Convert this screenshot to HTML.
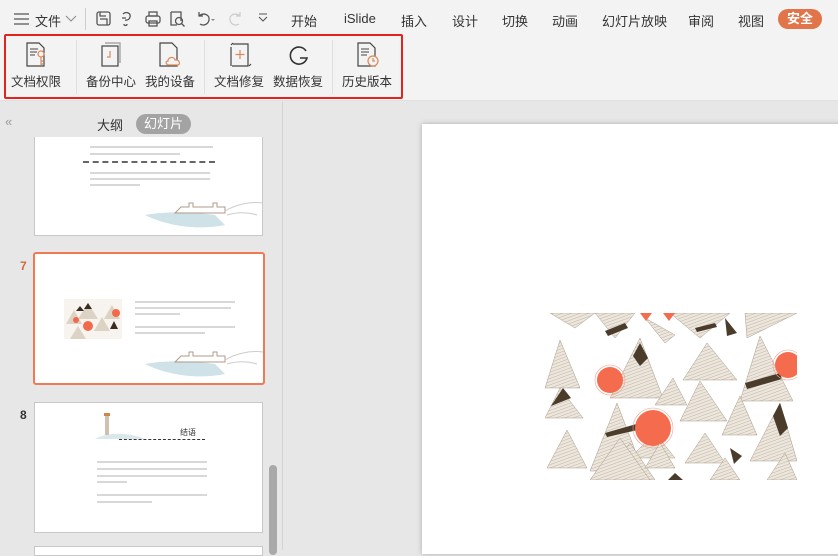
<!DOCTYPE html>
<html><head><meta charset="utf-8">
<style>
*{margin:0;padding:0;box-sizing:border-box}
body{width:838px;height:550px;overflow:hidden;background:#e7e7e7;font-family:"Liberation Sans","Noto Sans CJK SC",sans-serif;position:relative;color:#333}
.a{position:absolute}
.top{left:0;top:0;width:838px;height:101px;background:#f3f3f3;border-bottom:1px solid #e0e0e0}
.m{position:absolute;top:11px;font-size:13px;color:#333;white-space:nowrap}
.lbl{position:absolute;top:71px;font-size:12.5px;color:#333;white-space:nowrap;transform:translateX(-50%)}
.sep{position:absolute;top:40px;width:1px;height:54px;background:#e0e0e0}
.ic{position:absolute;top:42px}
.thumb{position:absolute;background:#fff;border:1px solid #c8c8c8}
.tl{position:absolute;height:1.5px;background:#d8d8d8}
</style></head><body>
<div class="a top"></div>
<svg class="a" style="left:13px;top:12px" width="18" height="14"><path d="M1 2h15M1 7h15M1 12h15" stroke="#555" stroke-width="1.3"/></svg>
<div class="m" style="left:35px">文件</div>
<svg class="a" style="left:65px;top:15px" width="12" height="8"><path d="M1 1l5 5 5-5" stroke="#888" fill="none"/></svg>
<div class="a" style="left:85px;top:8px;width:1px;height:22px;background:#ccc"></div>
<svg class="a" style="left:95px;top:10px" width="180" height="18" fill="none" stroke="#555" stroke-width="1.3">
<rect x="2" y="2" width="13" height="13" rx="2"/><path d="M5 9h7v6M5 2v4h6"/>
<path d="M28 4c3-3 8-1 7 3s-5 3-5 3M27 8h4M29 14c0 2 3 2 3 0"/>
<rect x="51" y="6" width="14" height="7" rx="2"/><rect x="54" y="2" width="8" height="4"/><rect x="54" y="11" width="8" height="5"/>
<path d="M76 2h10v9M76 2v13h6"/><circle cx="84" cy="11" r="3.5"/><path d="M86.5 13.5l3 3"/>
<path d="M104 6c5-4 11-1 10 4s-6 6-9 4M104 2v4h4"/>
<path d="M116 9l2 2 2-2" fill="#888" stroke="none"/>
<path d="M145 6c-5-4-11-1-10 4s6 6 9 4M145 2v4h-4" stroke="#ccc"/>
<path d="M164 7l4 4 4-4M164 4h8" stroke-width="1.1"/>
</svg>
<div class="m" style="left:291px">开始</div>
<div class="m" style="left:344px">iSlide</div>
<div class="m" style="left:401px">插入</div>
<div class="m" style="left:452px">设计</div>
<div class="m" style="left:502px">切换</div>
<div class="m" style="left:552px">动画</div>
<div class="m" style="left:602px">幻灯片放映</div>
<div class="m" style="left:688px">审阅</div>
<div class="m" style="left:738px">视图</div>
<div class="a" style="left:778px;top:9px;width:44px;height:20px;border-radius:10px;background:#e2744a;color:#fff;font-size:13px;text-align:center;line-height:20px;font-weight:bold">安全</div>
<div class="a" style="left:4px;top:34px;width:399px;height:65px;border:2.5px solid #e3241e;border-radius:2px"></div>
<div class="sep" style="left:76px"></div>
<div class="sep" style="left:204px"></div>
<div class="sep" style="left:332px"></div>
<svg class="ic" style="left:24px" width="24" height="26" fill="none" stroke="#444" stroke-width="1.2">
<path d="M3 1h12l5 5v18H3z"/><path d="M6 7h8M6 10h7M6 13h5" stroke-width="1"/><circle cx="17" cy="12" r="3" stroke="#d98a5a"/><path d="M17 15v8M17 19h2M17 22h2" stroke="#d98a5a"/></svg>
<svg class="ic" style="left:100px" width="24" height="26" fill="none" stroke="#444" stroke-width="1.2">
<path d="M5 1h15v20" stroke="#999"/><rect x="2" y="4" width="16" height="20"/><path d="M10 9v6H7" stroke="#d98a5a"/></svg>
<svg class="ic" style="left:158px" width="26" height="26" fill="none" stroke="#444" stroke-width="1.2">
<path d="M2 1h12l5 5v18H2z"/><path d="M11 23c-3 0-4-4-1-4 0-4 6-5 7-1 4-1 6 4 3 5z" fill="#f3f3f3" stroke="#d98a5a"/></svg>
<svg class="ic" style="left:227px" width="26" height="26" fill="none" stroke="#444" stroke-width="1.2">
<path d="M6 2h15v20M21 22v2h-16M4 5v19" /><path d="M4 3l2-2M22 24l2-2"/><path d="M13 8v9M8.5 12.5h9" stroke="#d98a5a"/></svg>
<svg class="ic" style="left:287px;top:44px" width="24" height="24" fill="none" stroke="#333" stroke-width="1.6">
<path d="M19 7A8.5 8.5 0 1 0 20 14H13"/></svg>
<svg class="ic" style="left:355px" width="26" height="26" fill="none" stroke="#444" stroke-width="1.2">
<path d="M3 1h12l5 5v18H3z"/><path d="M6 7h8M6 10h8M6 13h6" stroke-width="1"/><circle cx="18" cy="19" r="5" fill="#f3f3f3" stroke="#d98a5a"/><path d="M18 16v3h2" stroke="#d98a5a"/></svg>
<div class="lbl" style="left:36px">文档权限</div>
<div class="lbl" style="left:111px">备份中心</div>
<div class="lbl" style="left:170px">我的设备</div>
<div class="lbl" style="left:239px">文档修复</div>
<div class="lbl" style="left:298px">数据恢复</div>
<div class="lbl" style="left:367px">历史版本</div>
<div class="a" style="left:282px;top:102px;width:1px;height:448px;background:#d4d4d4"></div>
<div class="a" style="left:5px;top:114px;font-size:13px;color:#999">«</div>
<div class="a" style="left:97px;top:115px;font-size:13px;color:#333">大纲</div>
<div class="a" style="left:136px;top:114px;width:55px;height:20px;border-radius:10px;background:#a3a3a3;color:#fff;font-size:13px;text-align:center;line-height:20px">幻灯片</div>
<div class="thumb" style="left:34px;top:137px;width:229px;height:99px;border-top:none">
<div class="tl" style="left:55px;top:9px;width:123px"></div><div class="tl" style="left:55px;top:16px;width:90px"></div>
<div class="a" style="left:48px;top:24px;width:132px;border-top:2px dashed #666"></div>
<div class="tl" style="left:55px;top:35px;width:120px"></div><div class="tl" style="left:55px;top:41px;width:120px"></div><div class="tl" style="left:55px;top:47px;width:50px"></div>
<svg class="a" style="left:110px;top:64px" width="118" height="34"><path d="M0 14c20-4 50-3 70 0l10 10c-30 6-60 0-80-10z" fill="#cfe2e8"/><path d="M30 12h50v-6h-8v-4h-4v4h-20v-4h-4v4h-8z" fill="none" stroke="#b09a8a" stroke-width="1"/><path d="M80 10c10-6 25-10 38-8M82 14c10-3 20-3 30 0" stroke="#ccc" fill="none"/></svg>
</div>
<div class="a" style="left:20px;top:259px;font-size:12px;font-weight:bold;color:#d06a3c">7</div>
<div class="thumb" style="left:33px;top:252px;width:232px;height:133px;border:2.5px solid #ef7a54;border-radius:3px">
<svg class="a" style="left:29px;top:45px" width="58" height="40">
<rect width="58" height="40" fill="#f7f4ef"/><path d="M2 25l8-14 8 14zM14 20l10-16 10 16zM30 32l8-14 8 14zM40 20l8-14 8 14zM6 40l8-13 8 13z" fill="#ddd3c5"/><path d="M20 10l4-6 4 6zM46 30l4-8 4 8zM12 12l4-5 4 5z" fill="#3a2e22"/><circle cx="24" cy="27" r="5" fill="#f26a4b"/><circle cx="52" cy="14" r="4" fill="#f26a4b"/><circle cx="12" cy="21" r="3" fill="#f26a4b"/></svg>
<div class="tl" style="left:100px;top:47px;width:100px"></div><div class="tl" style="left:100px;top:53px;width:96px"></div><div class="tl" style="left:100px;top:59px;width:45px"></div>
<div class="tl" style="left:100px;top:72px;width:100px"></div><div class="tl" style="left:100px;top:78px;width:70px"></div>
<svg class="a" style="left:110px;top:96px" width="118" height="34"><path d="M0 14c20-4 50-3 70 0l10 10c-30 6-60 0-80-10z" fill="#cfe2e8"/><path d="M30 12h50v-6h-8v-4h-4v4h-20v-4h-4v4h-8z" fill="none" stroke="#b09a8a" stroke-width="1"/><path d="M80 10c10-6 25-10 38-8M82 14c10-3 20-3 30 0" stroke="#ccc" fill="none"/></svg>
</div>
<div class="a" style="left:20px;top:408px;font-size:12px;font-weight:bold;color:#333">8</div>
<div class="thumb" style="left:34px;top:402px;width:229px;height:131px">
<svg class="a" style="left:50px;top:8px" width="80" height="34"><path d="M10 28c10-6 30-8 50 0z" fill="#dbe8eb"/><rect x="20" y="4" width="4" height="20" fill="#d0c0b0"/><rect x="19" y="2" width="6" height="3" fill="#c84"/></svg>
<div class="a" style="left:84px;top:36px;width:86px;border-top:1px dashed #333"></div>
<div class="a" style="left:145px;top:24px;font-size:8px;color:#333">结语</div>
<div class="tl" style="left:62px;top:58px;width:110px"></div><div class="tl" style="left:62px;top:65px;width:110px"></div><div class="tl" style="left:62px;top:72px;width:110px"></div><div class="tl" style="left:62px;top:78px;width:30px"></div>
<div class="tl" style="left:62px;top:91px;width:110px"></div><div class="tl" style="left:62px;top:98px;width:55px"></div>
</div>
<div class="thumb" style="left:34px;top:546px;width:229px;height:10px"></div>
<div class="a" style="left:269px;top:465px;width:8px;height:90px;border-radius:4px;background:#a9a9a9"></div>
<div class="a" style="left:422px;top:124px;width:420px;height:430px;background:#fff;box-shadow:0 0 5px rgba(0,0,0,.25)"></div>
<svg class="a" style="left:545px;top:313px" width="252" height="167" viewBox="0 0 252 167">
<defs><pattern id="h" width="3" height="3" patternUnits="userSpaceOnUse" patternTransform="rotate(70)"><rect width="3" height="3" fill="#ece6dd"/><path d="M0 0v3" stroke="#b5a794" stroke-width=".8"/></pattern></defs>
<rect width="252" height="167" fill="#fff"/>
<g fill="url(#h)" stroke="#a89b8a" stroke-width=".5">
<path d="M5 0h45l-20 15zM50 0h40l-20 25zM125 0h60l-30 25zM200 0h52l-50 25zM100 5l20 25 10-8z"/>
<path d="M15 27l20 48H0z"/><path d="M15 75l23 30H0z"/><path d="M95 25l23 60H65z"/><path d="M128 65l14 27h-32z"/>
<path d="M162 30l30 37h-54z"/><path d="M215 23l33 65h-53z"/><path d="M155 68l27 40h-47z"/><path d="M195 83l17 39h-35z"/>
<path d="M72 90l26 68H45z"/><path d="M235 90l17 58h-47z"/><path d="M22 117l20 38H2z"/><path d="M160 120l20 30h-40z"/>
<path d="M110 120l20 25h-45z"/><path d="M240 140l12 27h-30z"/><path d="M85 130l25 37H60z"/><path d="M180 145l15 22h-30z"/>
</g>
<g fill="#4a3b2b">
<path d="M95 30l8 15-8 8-7-10z"/><path d="M60 18l20-8 3 5-20 8z"/><path d="M18 75l8 10-20 8z"/><path d="M200 70l35-10 2 6-35 10z"/>
<path d="M235 90l8 25-8 8-7-20z"/><path d="M60 120l35-10 2 6-35 8z"/><path d="M185 135l12 8-8 8z"/><path d="M88 152l10 15h-20z"/><path d="M130 160l8 7h-15z"/><path d="M180 5l12 15-10 3z"/><path d="M150 15l20-5 2 4-20 5z"/>
</g>
<g fill="#f56b4e"><circle cx="65" cy="67" r="13"/><circle cx="108" cy="115" r="18"/><circle cx="243" cy="52" r="13"/><path d="M95 0h12l-6 8zM118 0h12l-6 8z"/></g>
<g fill="none" stroke="#f5a090" stroke-width=".6"><circle cx="65" cy="67" r="15"/><circle cx="108" cy="115" r="20"/><circle cx="243" cy="52" r="15"/></g>
<g fill="url(#h)" stroke="#a89b8a" stroke-width=".5"><path d="M75 125l30 42H45z"/><path d="M115 130l15 25h-30z"/></g>
</svg>
</body></html>
